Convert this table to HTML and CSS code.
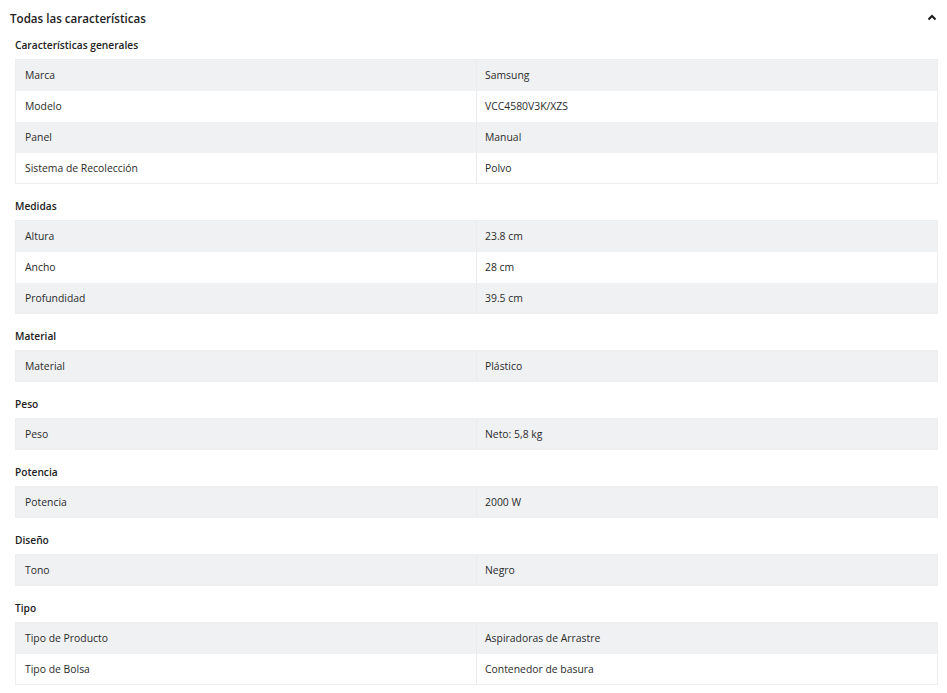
FILE: index.html
```html
<!DOCTYPE html>
<html lang="es">
<head>
    <meta charset="UTF-8">
    <meta name="viewport" content="width=device-width, initial-scale=1.0">
    <title>Todas las características</title>
    <link rel="stylesheet" href="styles.css">
</head>
<body>
    <div class="specs">
        <div class="specs-header">
            <h2>Todas las características</h2>
            <svg class="chevron" width="10" height="7" viewBox="0 0 10 7">
                <polyline points="1.5,5.5 5,2 8.5,5.5" fill="none" stroke="#1a1a1a" stroke-width="2"/>
            </svg>
        </div>

        <div class="specs-body">
            <div class="group">
                <h3>Características generales</h3>
                <table>
                    <tr><td>Marca</td><td>Samsung</td></tr>
                    <tr><td>Modelo</td><td>VCC4580V3K/XZS</td></tr>
                    <tr><td>Panel</td><td>Manual</td></tr>
                    <tr><td>Sistema de Recolección</td><td>Polvo</td></tr>
                </table>
            </div>

            <div class="group">
                <h3>Medidas</h3>
                <table>
                    <tr><td>Altura</td><td>23.8 cm</td></tr>
                    <tr><td>Ancho</td><td>28 cm</td></tr>
                    <tr><td>Profundidad</td><td>39.5 cm</td></tr>
                </table>
            </div>

            <div class="group">
                <h3>Material</h3>
                <table>
                    <tr><td>Material</td><td>Plástico</td></tr>
                </table>
            </div>

            <div class="group">
                <h3>Peso</h3>
                <table>
                    <tr><td>Peso</td><td>Neto: 5,8 kg</td></tr>
                </table>
            </div>

            <div class="group">
                <h3>Potencia</h3>
                <table>
                    <tr><td>Potencia</td><td>2000 W</td></tr>
                </table>
            </div>

            <div class="group">
                <h3>Diseño</h3>
                <table>
                    <tr><td>Tono</td><td>Negro</td></tr>
                </table>
            </div>

            <div class="group">
                <h3>Tipo</h3>
                <table>
                    <tr><td>Tipo de Producto</td><td>Aspiradoras de Arrastre</td></tr>
                    <tr><td>Tipo de Bolsa</td><td>Contenedor de basura</td></tr>
                </table>
            </div>
        </div>
    </div>
</body>
</html>
```

FILE: styles.css
```css
* {
    margin: 0;
    padding: 0;
    box-sizing: border-box;
}

body {
    font-family: 'Open Sans', 'Liberation Sans', sans-serif;
    background-color: #ffffff;
    color: #2b2b2b;
}

.specs {
    padding: 8px 9px 0 10px;
}

.specs-header {
    display: flex;
    justify-content: space-between;
    align-items: center;
    height: 20px;
}

.specs-header h2 {
    font-size: 11.6px;
    font-weight: 600;
    color: #222222;
}

.chevron {
    margin-right: 1px;
    margin-top: -2px;
}

.specs-body {
    padding-left: 5px;
    margin-top: -4px;
}

.group h3 {
    font-size: 10.2px;
    font-weight: 600;
    line-height: 14px;
    color: #222222;
    margin: 15px 0 7px;
}

.group:first-child h3 {
    margin-top: 14px;
}

table {
    width: 100%;
    border-collapse: collapse;
    border: 1px solid #eceef0;
    table-layout: fixed;
}

td {
    height: 31px;
    padding: 0 8px;
    font-size: 10.4px;
    color: #2b2b2b;
    vertical-align: middle;
}

td:first-child {
    padding-left: 9px;
    border-right: 1px solid #eaebed;
}

tr:nth-child(odd) td {
    background-color: #f0f1f3;
}
```
